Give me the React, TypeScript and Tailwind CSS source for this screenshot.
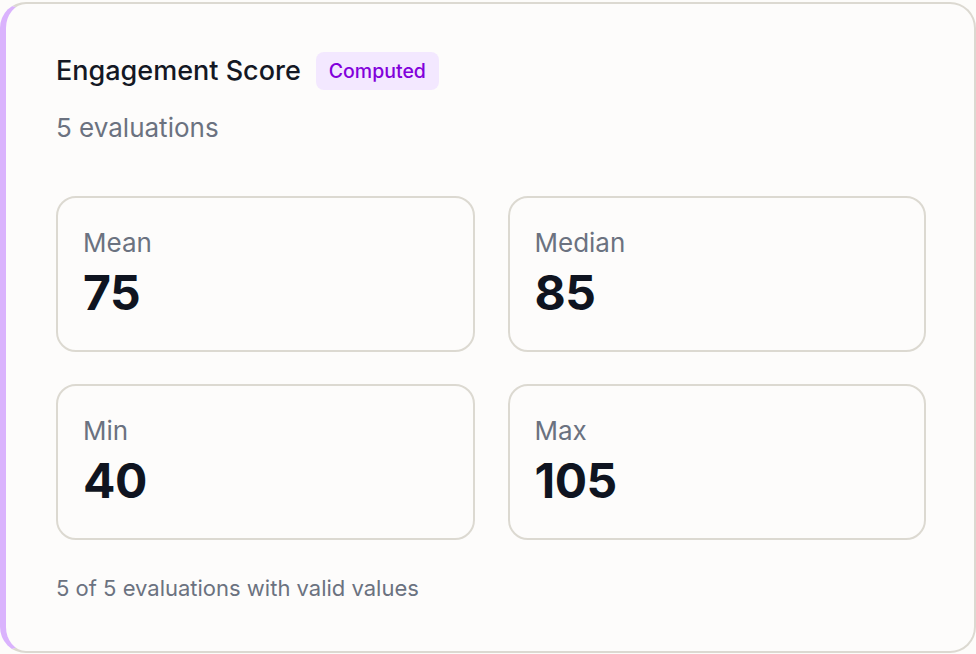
// Single stat summary card: header with badge, four stat tiles, footer note.

import type { ReactElement } from 'react'

const STATS: readonly { label: string; value: string }[] = [
  { label: 'Mean', value: '75' },
  { label: 'Median', value: '85' },
  { label: 'Min', value: '40' },
  { label: 'Max', value: '105' },
]

export default function App(): ReactElement {
  return (
    <div
      className="h-screen w-full bg-[#fdfcfa] pt-[2px]"
      style={{ fontFamily: 'Inter, "Noto Sans", sans-serif' }}
    >
      <div className="flex h-[651px] flex-col rounded-[26px] border-2 border-l-[6px] border-[#dcd9d1] border-l-[#dab3fd] bg-[#fdfcfb] pl-[50px] pr-[48px] pt-[48px]">
        <div className="flex items-center gap-[15px]">
          <h1 className="text-[27px] font-medium leading-8 text-[#141824]">Engagement Score</h1>
          <span className="rounded-lg bg-[#f3e8ff] px-[13px] py-[7px] text-[19.5px] leading-6 font-medium text-[#8200db]">
            Computed
          </span>
        </div>
        <p className="mt-[22px] text-[26px] leading-8 text-[#6b7280]">5 evaluations</p>
        <div className="mt-[52px] grid grid-cols-2 gap-x-[33px] gap-y-[32px]">
          {STATS.map((s) => (
            <StatTile key={s.label} label={s.label} value={s.value} />
          ))}
        </div>
        <p className="mt-[34px] text-[22px] leading-7 text-[#6b7280]">
          5 of 5 evaluations with valid values
        </p>
      </div>
    </div>
  )
}

function StatTile({ label, value }: { label: string; value: string }): ReactElement {
  return (
    <div className="flex h-[156px] flex-col rounded-[20px] border-2 border-[#dcd9d1] px-[25px] pt-[29px]">
      <span className="text-[26px] leading-8 text-[#6b7280]">{label}</span>
      <span className="mt-[10px] text-[48px] leading-[48px] font-bold tracking-[-0.01em] text-[#0f1420]">
        {value}
      </span>
    </div>
  )
}
